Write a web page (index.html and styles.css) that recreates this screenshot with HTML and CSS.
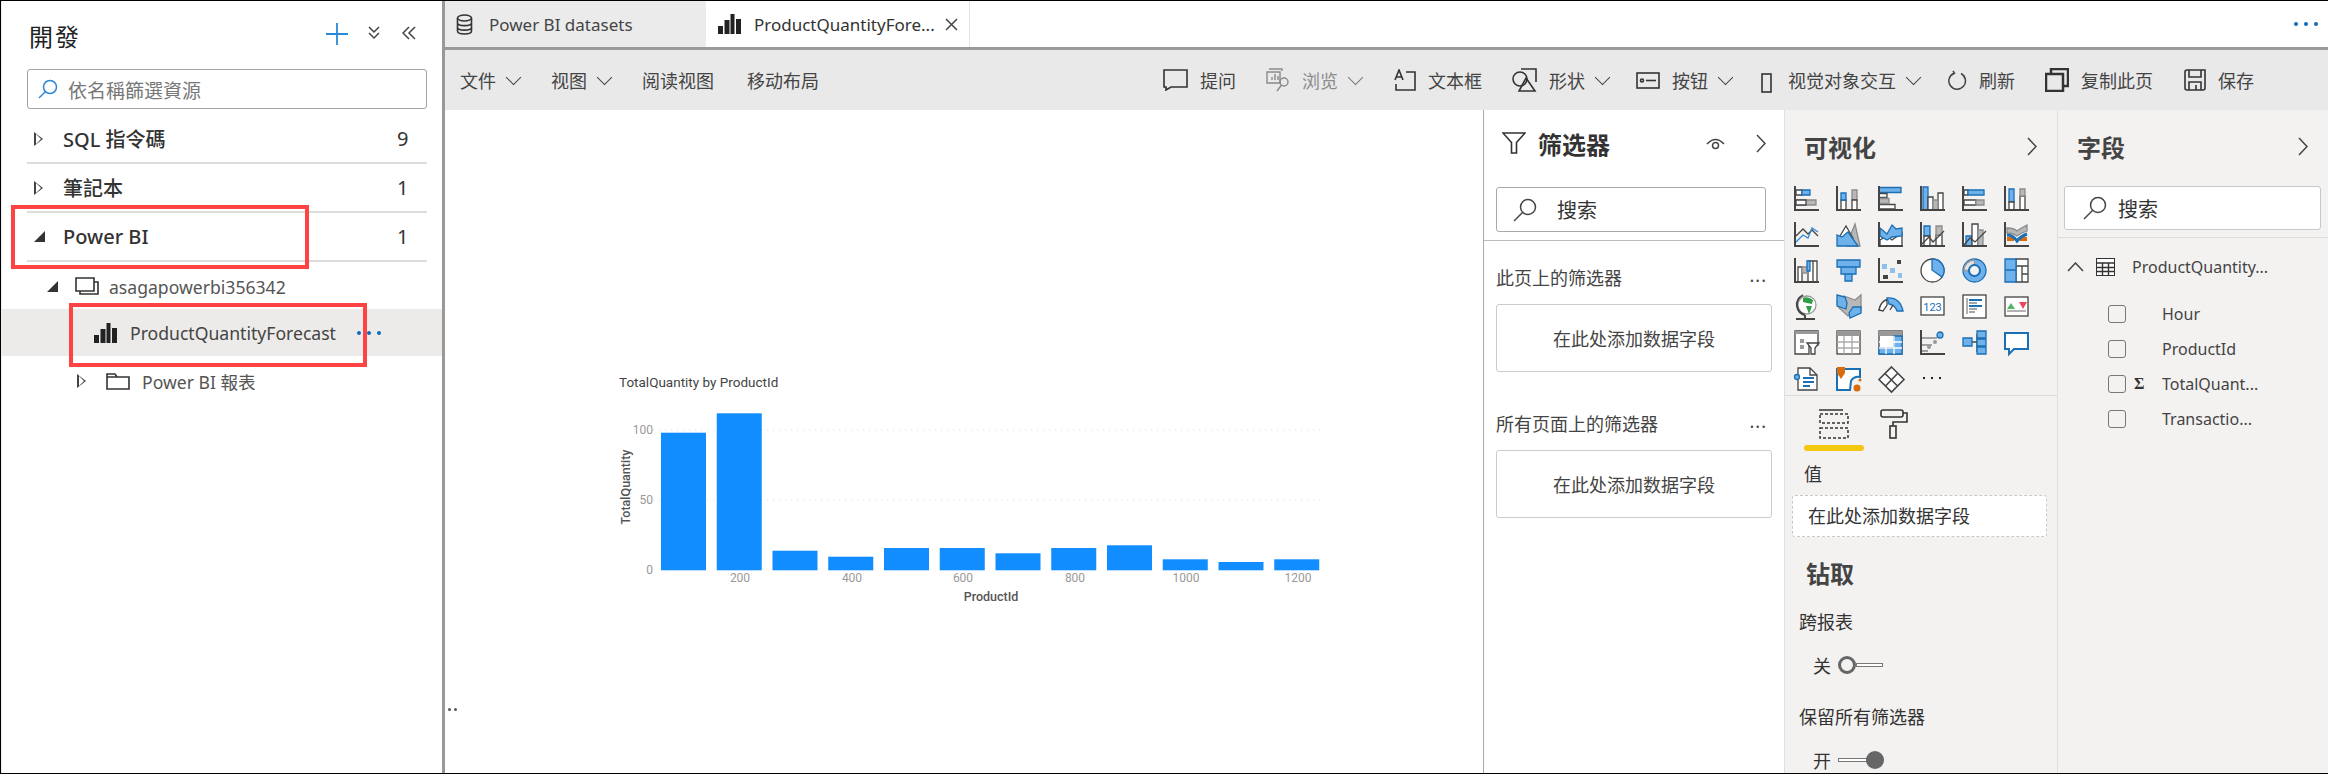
FILE: index.html
```html
<!DOCTYPE html>
<html lang="zh">
<head>
    <meta charset="UTF-8">
    <title>Power BI</title>
    <link rel="stylesheet" href="styles.css">
</head>
<body>
<div class="app">

    <!-- left resource panel -->
    <aside class="sidebar">
        <div class="side-head">
            <h1 class="side-title">開發</h1>
            <svg class="ic-plus" width="24" height="24" viewBox="0 0 24 24"><path d="M12 1V23M1 12H23"/></svg>
            <svg class="ic-line ic-dchev" width="14" height="14" viewBox="0 0 14 14"><path d="M2 1L7 6L12 1M2 7L7 12L12 7"/></svg>
            <svg class="ic-line ic-lchev" width="14" height="14" viewBox="0 0 14 14"><path d="M7 1L1 7L7 13M13 1L7 7L13 13"/></svg>
        </div>
        <div class="side-search">
            <svg class="ic-blue" width="20" height="20" viewBox="0 0 20 20"><circle cx="12" cy="8" r="6.5"/><path d="M7.5 12.5L1 19"/></svg>
            <span>依名稱篩選資源</span>
        </div>

        <div class="group"><span class="caret-o"></span><span class="group-name">SQL 指令碼</span><span class="group-count">9</span></div>
        <div class="group"><span class="caret-o"></span><span class="group-name">筆記本</span><span class="group-count">1</span></div>
        <div class="group"><span class="caret-f"></span><span class="group-name">Power BI</span><span class="group-count">1</span></div>

        <div class="tree tree-ws">
            <span class="caret-f"></span>
            <svg class="ic-dark" width="25" height="20" viewBox="0 0 25 20"><path d="M1 1H19V14H1ZM5 14V17H23V5H19"/></svg>
            <span>asagapowerbi356342</span>
        </div>
        <div class="tree tree-sel">
            <svg width="23" height="20" viewBox="0 0 23 20" class="ic-fill"><rect x="0" y="12" width="5" height="8"/><rect x="6.5" y="6" width="5" height="14"/><rect x="12.5" y="0" width="4" height="20"/><rect x="18" y="5" width="5" height="15"/></svg>
            <span>ProductQuantityForecast</span>
            <span class="blue-dots"><i></i><i></i><i></i></span>
        </div>
        <div class="tree tree-rep">
            <span class="caret-o"></span>
            <svg class="ic-dark" width="24" height="17" viewBox="0 0 24 17"><path d="M1 16V1H9L11 4H23V16Z M1 4H11"/></svg>
            <span>Power BI 報表</span>
        </div>

        <div class="mark mark-group"></div>
        <div class="mark mark-report"></div>
    </aside>

    <main class="main">
        <!-- tabs -->
        <div class="tabs">
            <div class="tab">
                <svg class="ic-dark" width="17" height="21" viewBox="0 0 17 21"><ellipse cx="8.5" cy="4" rx="7" ry="3"/><path d="M1.5 4V17C1.500 21 15.500 21 15.500 17V4M1.500 9C1.500 12.500 15.500 12.500 15.500 9M1.500 13.500C1.500 17 15.500 17 15.500 13.500"/></svg>
                <span>Power BI datasets</span>
            </div>
            <div class="tab tab-on">
                <svg class="ic-fill" width="23" height="20" viewBox="0 0 23 20"><rect x="0" y="12" width="5" height="8"/><rect x="6.500" y="6" width="5" height="14"/><rect x="12.500" y="0" width="4" height="20"/><rect x="18" y="5" width="5" height="15"/></svg>
                <span>ProductQuantityFore...</span>
                <svg class="ic-line tab-x" width="13" height="13" viewBox="0 0 13 13"><path d="M1 1L12 12M12 1L1 12"/></svg>
            </div>
            <span class="blue-dots tabs-more"><i></i><i></i><i></i></span>
        </div>

        <!-- ribbon -->
        <div class="ribbon">
            <div class="tool"><span>文件</span><b class="chev"></b></div>
            <div class="tool"><span>视图</span><b class="chev"></b></div>
            <div class="tool"><span>阅读视图</span></div>
            <div class="tool"><span>移动布局</span></div>

            <div class="tool tool-first">
                <svg class="ic-dark" width="25" height="22" viewBox="0 0 25 22"><path d="M1 1H24V18H8L3 21V18H1Z"/></svg>
                <span>提问</span>
            </div>
            <div class="tool tool-off">
                <svg class="ic-grey" width="24" height="24" viewBox="0 0 24 24"><path d="M3 1H16V3M1 4H14V15H1ZM6 12V9M9 12V6M12 12V8"/><circle cx="18" cy="14" r="4"/><path d="M15.500 17L11 23"/></svg>
                <span>浏览</span><b class="chev"></b>
            </div>
            <div class="tool">
                <svg class="ic-dark" width="23" height="22" viewBox="0 0 23 22"><path d="M2 11L6 1L10 11M3.500 8H8.500M13 3H22V21H3V15"/></svg>
                <span>文本框</span>
            </div>
            <div class="tool">
                <svg class="ic-dark" width="25" height="24" viewBox="0 0 25 24"><circle cx="8" cy="11" r="7"/><path d="M9 1H24V14M14 10L23 23H7Z"/></svg>
                <span>形状</span><b class="chev"></b>
            </div>
            <div class="tool">
                <svg class="ic-dark" width="24" height="17" viewBox="0 0 24 17"><rect x="1" y="1" width="22" height="15"/><circle cx="6" cy="8.500" r="1.500"/><path d="M10 8.500H20"/></svg>
                <span>按钮</span><b class="chev"></b>
            </div>
            <div class="tool">
                <svg class="ic-dark ic-phone" width="11" height="20" viewBox="0 0 11 20"><rect x="1" y="1" width="9" height="18"/></svg>
                <span>视觉对象交互</span><b class="chev"></b>
            </div>
            <div class="tool">
                <svg class="ic-thin" width="19" height="21" viewBox="0 0 19 21"><path d="M13 3.500A8.300 8.300 0 1 1 6 3.200M5 1L6.500 3.300L4 5"/></svg>
                <span>刷新</span>
            </div>
            <div class="tool">
                <svg class="ic-bold" width="24" height="24" viewBox="0 0 24 24"><path d="M6 6V1H23V18H18M1 6H18V23H1Z"/></svg>
                <span>复制此页</span>
            </div>
            <div class="tool">
                <svg class="ic-dark" width="22" height="22" viewBox="0 0 22 22"><path d="M1 3Q1 1 3 1H21V19Q21 21 19 21H3Q1 21 1 19ZM5 1V8H17V1M5 21V13H17V21M12 16V21"/></svg>
                <span>保存</span>
            </div>
        </div>

        <div class="work">
            <!-- report canvas -->
            <section class="canvas">
                <svg class="chart" width="740" height="260" viewBox="600 360 740 260">
                    <text class="c-title" x="619" y="387">TotalQuantity by ProductId</text>
                    <path class="c-grid" d="M647 430H1320M647 500H1320"/>
                    <g class="c-bars">
                        <rect x="661" y="432.700" width="45" height="137.600"/>
                        <rect x="716.750" y="413.300" width="45" height="157"/>
                        <rect x="772.500" y="550.700" width="45" height="19.600"/>
                        <rect x="828.250" y="556.700" width="45" height="13.600"/>
                        <rect x="884" y="548" width="45" height="22.300"/>
                        <rect x="939.750" y="548" width="45" height="22.300"/>
                        <rect x="995.500" y="553.300" width="45" height="17"/>
                        <rect x="1051.250" y="548" width="45" height="22.300"/>
                        <rect x="1107" y="545.300" width="45" height="25"/>
                        <rect x="1162.750" y="559.300" width="45" height="11"/>
                        <rect x="1218.500" y="562" width="45" height="8.300"/>
                        <rect x="1274.250" y="559.300" width="45" height="11"/>
                    </g>
                    <g class="c-tick c-y">
                        <text x="653" y="434">100</text>
                        <text x="653" y="504">50</text>
                        <text x="653" y="574">0</text>
                    </g>
                    <g class="c-tick c-x">
                        <text x="740" y="582">200</text>
                        <text x="852" y="582">400</text>
                        <text x="963" y="582">600</text>
                        <text x="1075" y="582">800</text>
                        <text x="1186" y="582">1000</text>
                        <text x="1298" y="582">1200</text>
                    </g>
                    <text class="c-axis" x="991" y="601">ProductId</text>
                    <text class="c-axis" transform="translate(630 487) rotate(-90)">TotalQuantity</text>
                </svg>
                <span class="grip"><i></i><i></i></span>
            </section>

            <!-- filters -->
            <section class="filters">
                <div class="filters-head">
                    <svg class="ic-dark" width="24" height="22" viewBox="0 0 24 22"><path d="M1 1H23L14.500 10.500V21H9.500V10.500Z"/></svg>
                    <h2>筛选器</h2>
                    <svg class="ic-thin f-eye" width="19" height="12" viewBox="0 0 19 12"><path d="M1 6Q9.500 -3 18 6"/><circle cx="9.500" cy="7.500" r="3"/></svg>
                    <svg class="ic-line f-chev" width="10" height="19" viewBox="0 0 10 19"><path d="M1 1L9 9.500L1 18"/></svg>
                </div>
                <div class="search f-search">
                    <svg class="ic-thin" width="24" height="24" viewBox="0 0 24 24"><circle cx="15" cy="9" r="7.500"/><path d="M9.500 14.500L1 23"/></svg>
                    <span>搜索</span>
                </div>
                <div class="f-body">
                    <div class="f-label"><span>此页上的筛选器</span><em>...</em></div>
                    <div class="f-drop">在此处添加数据字段</div>
                    <div class="f-label f-label-2"><span>所有页面上的筛选器</span><em>...</em></div>
                    <div class="f-drop">在此处添加数据字段</div>
                </div>
            </section>

            <!-- visualizations -->
            <section class="viz">
                <div class="pane-head">
                    <h2>可视化</h2>
                    <svg class="ic-line" width="10" height="19" viewBox="0 0 10 19"><path d="M1 1L9 9.500L1 18"/></svg>
                </div>
                <div class="viz-grid">
                    <svg viewBox="0 0 25 25"><path class="gr" d="M2 14H22V19H2Z"/><path class="wh" d="M2 14H12V19H2ZM2 4H8V9H2Z"/><path class="bl" d="M8 4H16V9H8Z"/><path class="ax" d="M1 0V24H25"/></svg>
                    <svg viewBox="0 0 25 25"><path class="gr" d="M16 4H21V14H16Z"/><path class="wh" d="M16 14H21V24H16ZM5 14H10V24H5Z"/><path class="bl" d="M5 7H10V14H5Z"/><path class="ax" d="M1 0V24H25"/></svg>
                    <svg viewBox="0 0 25 25"><path class="bl" d="M1 1.500H23V6.500H1Z"/><path class="wh" d="M1 7.500H9V11.500H1ZM1 18.500H17V23H1Z"/><path class="gr" d="M1 12.500H11V17.500H1Z"/><path class="ax" d="M1 0V24H25"/></svg>
                    <svg viewBox="0 0 25 25"><path class="bl" d="M3 1H8V24H3Z"/><path class="wh" d="M8 11H13V24H8ZM18 7H23V24H18Z"/><path class="gr" d="M13 14H18V24H13Z"/><path class="ax" d="M1 0V24H25"/></svg>
                    <svg viewBox="0 0 25 25"><path class="wh" d="M2 4H6V9H2ZM2 14H14V19H2Z"/><path class="bl" d="M6 4H22V9H6Z"/><path class="gr" d="M14 14H22V19H14Z"/><path class="ax" d="M1 0V24H25"/></svg>
                    <svg viewBox="0 0 25 25"><path class="bl" d="M5 3H10V16H5Z"/><path class="wh" d="M5 16H10V24H5ZM16 10H21V24H16Z"/><path class="gr" d="M16 3H21V10H16Z"/><path class="ax" d="M1 0V24H25"/></svg>

                    <svg viewBox="0 0 25 25"><path class="ax1" d="M2 14L9 7L14 12L18 8L24 14"/><path class="ln" d="M2 20L9 13L14 16L18 6L24 10"/><path class="ax" d="M1 0V24H25"/></svg>
                    <svg viewBox="0 0 25 25"><path class="gr" d="M11 22L19 2L24 24H11Z"/><path class="wh" d="M4 14L10 4L17 16L10 18Z"/><path class="bl" d="M1 24V13L6 15L12 10L22 24Z"/></svg>
                    <svg viewBox="0 0 25 25"><path class="wh" d="M2 18L9 14L14 18L24 11V24H2Z"/><path class="bl" d="M2 6L9 12L14 3L18 7L24 6V14L14 15L9 18L2 14Z"/><path class="ax" d="M1 0V24H25"/></svg>
                    <svg viewBox="0 0 25 25"><path class="bl" d="M4 4H10V14H4Z"/><path class="wh" d="M4 14H10V24H4ZM16 13H22V24H16Z"/><path class="gr" d="M16 4H22V13H16Z"/><path class="ax1" d="M2 22L9 15L13 20L24 9"/><path class="ax" d="M1 0V24H25"/></svg>
                    <svg viewBox="0 0 25 25"><path class="bl" d="M4 14H10V24H4Z"/><path class="wh" d="M10 2H16V24H10Z"/><path class="gr" d="M16 8H21V24H16Z"/><path class="ax1" d="M2 23L8 16L13 20L24 9"/><path class="ax" d="M1 0V24H25"/></svg>
                    <svg viewBox="0 0 25 25"><path class="or" d="M3 15H10V19H3ZM16 15H23V19H16Z"/><path class="gr" d="M3 6Q10 6 13 9Q17 6 23 3V9Q17 11 13 14Q9 11 3 11Z"/><path class="rb" d="M3 13Q9 13 13 19Q17 14 23 12"/><path class="ax" d="M1 0V24H25"/></svg>

                    <svg viewBox="0 0 25 25"><path class="wh" d="M4 9H8V24H4ZM19 3H23V24H19ZM14 3H19V24H14Z"/><path class="gr" d="M8 9H14V15H8Z"/><path class="bl" d="M13 3H16V13H13Z"/><path class="ax" d="M1 0V24H25"/></svg>
                    <svg viewBox="0 0 25 25"><path class="bl" d="M1 2H24V9H1ZM5 9H20V16H5ZM9 16H16V23H9Z"/></svg>
                    <svg viewBox="0 0 25 25"><path class="sq" d="M4 6H9V11H4ZM12 10H17V15H12ZM20 15H24V20H20Z"/><path class="dk" d="M19 2H23V6H19ZM5 17H10V21H5Z"/><path class="ax" d="M1 0V24H25"/></svg>
                    <svg viewBox="0 0 25 25"><circle class="pie" cx="12.500" cy="12.500" r="11.500"/><path class="bl" d="M12 1A11.500 11.500 0 0 1 22 19L12 12Z"/></svg>
                    <svg viewBox="0 0 25 25"><circle class="bl" cx="12.500" cy="12.500" r="11.500"/><path class="don-a" d="M2 12.500A10.500 10.500 0 0 1 12.500 2V7A5.500 5.500 0 0 0 7 12.500Z"/><circle class="don-h" cx="12.500" cy="12.500" r="5.500"/></svg>
                    <svg viewBox="0 0 25 25"><path class="wh" d="M12 1H24V8H12ZM12 8H18V24H12ZM18 8H24V16H18ZM18 16H24V24H18Z"/><path class="bl" d="M1 1H12V12H1ZM1 12H12V24H1Z"/></svg>

                    <svg viewBox="0 0 25 25"><circle class="gl-w" cx="13" cy="11" r="9"/><path class="gl-g" d="M9 4Q14 2 19 6L18 10L13 9L9 8ZM12 12L18 12L15 20Z"/><path class="ax" d="M9 1Q2 5 3 12Q4 19 11 21M2 25H21M11 21V25"/></svg>
                    <svg viewBox="0 0 25 25"><path class="gr" d="M8 2L19 6L25 1V16L18 19L12 22L3 14L1 8Z"/><path class="bl" d="M1 1L9 3L11 9L10 15L1 12ZM13 19L17 13L25 13V19L14 24Z"/></svg>
                    <svg viewBox="0 0 25 25"><path class="wh" d="M1 16Q2 8 9 6V11L5 17Z"/><path class="bl" d="M9 4Q22 3 25 17H19Q17 11 11 10Z"/><path class="ax1" d="M1 17Q2 8 9 5M12 16L15 11"/></svg>
                    <svg viewBox="0 0 25 25"><rect class="cd" x="1" y="3" width="23" height="18"/><text class="card-num" x="12.500" y="17">123</text></svg>
                    <svg viewBox="0 0 25 25"><rect class="cd" x="1" y="1" width="23" height="23"/><path class="ln2" d="M7 6H20M7 12H20"/><path class="ln3" d="M7 9H15M7 15H15M7 18H13M5 4V20"/></svg>
                    <svg viewBox="0 0 25 25"><rect class="cd" x="1" y="3" width="23" height="19"/><path class="up" d="M7 9L11 15H3Z"/><path class="dn" d="M15 8H23L19 15Z"/><path class="ln3" d="M3 17H22"/></svg>

                    <svg viewBox="0 0 25 25"><path class="cd" d="M1 1H24V15H15V24H1Z"/><path class="gf" d="M1 1H24V4H1ZM6 9H10V13H6ZM6 15H10V19H6Z"/><path class="fn" d="M13 13H25L21 18V24H17V18Z"/></svg>
                    <svg viewBox="0 0 25 25"><rect class="cd" x="1" y="1" width="23" height="23"/><path class="gf" d="M1 1H24V6H1Z"/><path class="tg" d="M1 12H24M1 18H24M8 6V24M16 6V24"/></svg>
                    <svg viewBox="0 0 25 25"><rect class="cd" x="1" y="1" width="23" height="23"/><path class="gf" d="M1 1H24V6H1Z"/><path class="bl-s" d="M16 6H24V24H1V18H16Z"/><path class="tw" d="M1 12H24M1 18H24M8 6V24M16 6V24"/></svg>
                    <svg viewBox="0 0 25 25"><path class="gl" d="M1 8H17M1 15H12M1 21H8"/><circle class="kb" cx="20" cy="5" r="3"/><circle class="kg" cx="15" cy="12" r="2"/><circle class="kg" cx="9" cy="17" r="2"/><path class="ax" d="M1 0V24H25"/></svg>
                    <svg viewBox="0 0 25 25"><path class="tr" d="M10 12H15M15 4V22"/><path class="bl-s" d="M1 8H10V16H1ZM15 1H24V8H15ZM15 9H24V16H15ZM15 17H24V24H15Z"/></svg>
                    <svg viewBox="0 0 25 25"><path class="qa" d="M1 3H24V19H10L5 24V19H1Z"/></svg>

                    <svg viewBox="0 0 25 25"><path class="cd" d="M4 2H16L23 9V24H4Z"/><path class="ax1" d="M16 2V9H23"/><circle class="kb" cx="3" cy="11" r="2.500"/><path class="ln2" d="M9 12H20M9 16H20M9 20H16"/></svg>
                    <svg viewBox="0 0 25 25"><path class="bl-w" d="M1 3H24V11Q18 10 15 15L14 24H1Z"/><path class="or" d="M1 1H9V7L5 13L1 7Z"/><circle class="or" cx="21" cy="22" r="3.500"/><circle class="or" cx="24" cy="14" r="1.500"/></svg>
                    <svg class="v-wide" viewBox="0 0 27 27"><path class="ax2" d="M13.500 1L26 13.500L13.500 26L1 13.500ZM7 7.500L19.500 20M20 7L8 19.500"/></svg>
                    <svg viewBox="0 0 25 25"><path class="dots-k" d="M3 12H5M11 12H13M19 12H21"/></svg>
                </div>
                <div class="viz-tabs">
                    <div class="viz-tab viz-tab-on">
                        <svg class="ic-dash" width="30" height="30" viewBox="0 0 30 30"><path class="solid" d="M0 1H24"/><rect x="1" y="5" width="28" height="9"/><rect x="1" y="19" width="28" height="10"/></svg>
                    </div>
                    <div class="viz-tab">
                        <svg class="ic-dark" width="28" height="30" viewBox="0 0 28 30"><rect x="1" y="1" width="22" height="7" rx="2"/><path d="M23 4H27V13H13V17"/><rect x="10" y="17" width="6" height="12"/></svg>
                    </div>
                </div>
                <div class="wells">
                    <div class="v-label">值</div>
                    <div class="v-drop">在此处添加数据字段</div>
                    <h3>钻取</h3>
                    <div class="v-label v-small">跨报表</div>
                    <div class="toggle"><span>关</span><span class="knob knob-off"></span><span class="track"></span></div>
                    <div class="v-label v-small v-keep">保留所有筛选器</div>
                    <div class="toggle toggle-on"><span>开</span><span class="track"></span><span class="knob"></span></div>
                </div>
            </section>

            <!-- fields -->
            <section class="fields">
                <div class="pane-head">
                    <h2>字段</h2>
                    <svg class="ic-line" width="10" height="19" viewBox="0 0 10 19"><path d="M1 1L9 9.500L1 18"/></svg>
                </div>
                <div class="search w-search">
                    <svg class="ic-thin" width="24" height="24" viewBox="0 0 24 24"><circle cx="15" cy="9" r="7.500"/><path d="M9.500 14.500L1 23"/></svg>
                    <span>搜索</span>
                </div>
                <div class="w-table">
                    <svg class="ic-thin" width="17" height="10" viewBox="0 0 17 10"><path d="M1 9L8.500 1L16 9"/></svg>
                    <svg class="ic-tbl" width="19" height="18" viewBox="0 0 19 18"><rect x="0.500" y="0.500" width="18" height="17"/><path d="M0 5H19M0 9.500H19M0 13.500H19M6.500 5V18M12.500 5V18"/></svg>
                    <span>ProductQuantity...</span>
                </div>
                <div class="w-row"><i class="check"></i><b class="sig"></b><span>Hour</span></div>
                <div class="w-row"><i class="check"></i><b class="sig"></b><span>ProductId</span></div>
                <div class="w-row"><i class="check"></i><b class="sig">Σ</b><span>TotalQuant...</span></div>
                <div class="w-row"><i class="check"></i><b class="sig"></b><span>Transactio...</span></div>
            </section>
        </div>
    </main>
</div>
</body>
</html>
```

FILE: styles.css
```css
* {
    box-sizing: border-box;
}

html, body {
    margin: 0;
    height: 100%;
    overflow: hidden;
    background: #fff;
}

body {
    font-family: 'Noto Sans', 'Noto Sans CJK SC', sans-serif;
    color: #333;
}

h1, h2, h3 {
    margin: 0;
}

svg {
    display: block;
    flex: none;
}

.app {
    display: flex;
    width: 2328px;
    height: 774px;
    border-top: 1px solid #000;
    border-left: 1px solid #000;
    border-bottom: 1px solid #000;
}

/* shared icon strokes */
.ic-line path, .ic-thin path, .ic-thin circle, .ic-dark path, .ic-dark rect, .ic-dark circle, .ic-dark ellipse,
.ic-grey path, .ic-grey circle, .ic-bold path, .ic-blue path, .ic-blue circle, .ic-plus path {
    fill: none;
}

.ic-line path { stroke: #444; stroke-width: 1.500; }
.ic-thin path, .ic-thin circle { stroke: #444; stroke-width: 1.500; }
.ic-dark path, .ic-dark rect, .ic-dark circle, .ic-dark ellipse { stroke: #333; stroke-width: 1.600; }
.ic-grey path, .ic-grey circle { stroke: #8a8a8a; stroke-width: 1.400; }
.ic-bold path { stroke: #333; stroke-width: 2.500; }
.ic-blue path, .ic-blue circle { stroke: #2b88d8; stroke-width: 1.500; }
.ic-plus path { stroke: #2b88d8; stroke-width: 1.800; }
.ic-fill rect { fill: #222; }

/* sidebar */
.sidebar {
    position: relative;
    width: 444px;
    flex: none;
    border-left: 1px solid #ececec;
    border-right: 3px solid #999;
}

.side-head {
    display: flex;
    align-items: center;
    height: 68px;
    padding: 0 0 0 27px;
}

.side-title {
    font: 400 24px 'Noto Sans CJK TC', sans-serif;
    color: #222;
    letter-spacing: 2px;
    width: 296px;
}

.ic-dchev { margin-left: 18px; }
.ic-lchev { margin-left: 21px; }
.ic-plus { margin-top: -3px; }
.ic-dchev, .ic-lchev { margin-top: -4px; }

.side-search {
    display: flex;
    align-items: center;
    gap: 10px;
    margin: 0 0 6px 25px;
    width: 400px;
    height: 40px;
    padding-left: 10px;
    border: 1px solid #a3a3a3;
    border-radius: 3px;
    font: 19px 'Noto Sans CJK TC', sans-serif;
    color: #777;
}

.group {
    display: flex;
    align-items: center;
    margin-left: 25px;
    width: 400px;
    height: 49px;
    border-bottom: 2px solid #ddd;
    font: 500 20px 'Noto Sans', 'Noto Sans CJK TC', sans-serif;
    color: #333;
}

.group-name { margin-left: 20px; flex: 1; }
.group-count { width: 30px; text-align: left; font-weight: 400; }

.caret-o {
    width: 0;
    height: 0;
    margin-left: 7px;
    border-left: 9px solid #444;
    border-top: 7.500px solid transparent;
    border-bottom: 7.500px solid transparent;
    position: relative;
    flex: none;
}

.caret-o::after {
    content: "";
    position: absolute;
    left: -7.500px;
    top: -5px;
    border-left: 5.500px solid #fff;
    border-top: 5px solid transparent;
    border-bottom: 5px solid transparent;
}

.caret-f {
    width: 0;
    height: 0;
    margin-left: 7px;
    border-bottom: 11px solid #333;
    border-left: 11px solid transparent;
    flex: none;
}

.group .caret-f + .group-name { margin-left: 18px; }

.tree {
    display: flex;
    align-items: center;
    font: 17.600px 'Noto Sans', 'Noto Sans CJK TC', sans-serif;
    color: #555;
}

.tree-ws {
    height: 47px;
    padding: 2px 0 0 38px;
}

.tree-ws svg { margin-left: 17px; margin-right: 9px; }

.tree-sel {
    height: 47px;
    padding-left: 92px;
    gap: 13px;
    background: #edebe9;
    color: #444;
}

.tree-rep {
    height: 50px;
    padding-left: 68px;
}

.tree-rep svg { margin-left: 20px; margin-right: 12px; }

.blue-dots {
    display: flex;
    gap: 6px;
    margin-left: 8px;
}

.blue-dots i {
    width: 4px;
    height: 4px;
    border-radius: 50%;
    background: #0f6cbd;
}

.mark {
    position: absolute;
    border: 4px solid #ff4343;
}

.mark-group { left: 9px; top: 204px; width: 298px; height: 64px; }
.mark-report { left: 67px; top: 302px; width: 298px; height: 64px; }

/* main */
.main {
    flex: 1;
    display: flex;
    flex-direction: column;
    min-width: 0;
}

.tabs {
    display: flex;
    align-items: center;
    height: 46px;
    flex: none;
    font-size: 17px;
}

.tab {
    display: flex;
    align-items: center;
    height: 100%;
    width: 261px;
    padding-left: 11px;
    gap: 16px;
    background: #ebebeb;
    color: #444;
}

.tab-on {
    width: 264px;
    padding-left: 12px;
    gap: 13px;
    background: #fff;
    border-right: 1px solid #e4e4e4;
    color: #333;
}

.tab-x { margin-left: -3px; }

.tabs-more {
    margin-left: auto;
    margin-right: 10px;
}

.ribbon {
    display: flex;
    align-items: center;
    gap: 30px;
    height: 63px;
    flex: none;
    padding: 0 74px 0 15px;
    background: #e9e9e9;
    border-top: 3px solid #999;
    font-size: 18px;
    color: #444;
}

.tool {
    display: flex;
    align-items: center;
    gap: 12px;
    height: 100%;
}

.tool:nth-child(4) { margin-left: 3px; }
.tool:nth-child(9) { margin-left: -4px; }
.tool:nth-child(10) { margin-left: -2px; }
.tool:nth-child(11) { margin-left: -3px; }
.tool:nth-child(13) { margin-left: 1px; }

.tool-first { margin-left: auto; }
.tool-off { color: #8c8c8c; }
.tool-off .chev { border-color: #777; }
.ic-phone { margin-top: 6px; margin-right: 4px; }

.chev {
    display: block;
    width: 11px;
    height: 11px;
    margin: -6px 2px 0 0;
    border-right: 1.500px solid #444;
    border-bottom: 1.500px solid #444;
    transform: rotate(45deg);
}

.work {
    flex: 1;
    display: flex;
    min-height: 0;
}

/* canvas with the chart */
.canvas {
    position: relative;
    flex: 1;
    min-width: 0;
    padding: 250px 0 0 155px;
}

.chart text { font-family: 'Roboto', sans-serif; }
.c-title { font-size: 13.500px; fill: #444; }
.c-grid { stroke: #ddd; stroke-width: 1; stroke-dasharray: 1 5; fill: none; }
.c-bars rect { fill: #118dff; }
.c-tick { font-size: 12px; fill: #999; }
.c-y { text-anchor: end; }
.c-x { text-anchor: middle; }
.c-axis { font-size: 12.500px; font-weight: 500; fill: #555; text-anchor: middle; }

.grip {
    position: absolute;
    left: 3px;
    top: 598px;
    display: flex;
    gap: 3px;
}

.grip i {
    width: 3px;
    height: 3px;
    background: #555;
    border-radius: 50%;
}

/* filter pane */
.filters {
    width: 302px;
    flex: none;
    border-left: 1px solid #aaa;
    border-right: 1px solid #e1dfdd;
}

.filters-head {
    display: flex;
    align-items: center;
    height: 66px;
    margin-bottom: 11px;
    padding-left: 18px;
}

.filters-head h2 {
    font: 700 24px 'Noto Sans CJK SC', sans-serif;
    color: #333;
    margin-left: 12px;
    width: 168px;
}

.f-eye { margin-top: 2px; }
.f-chev { margin-left: 31px; }

.search {
    display: flex;
    align-items: center;
    background: #fff;
    border-radius: 3px;
    font-size: 20px;
    color: #333;
}

.f-search {
    margin-left: 12px;
    width: 270px;
    height: 45px;
    padding-left: 16px;
    gap: 20px;
    border: 1px solid #aaa;
}

.f-body {
    margin-top: 8px;
    padding: 0 12px;
    border-top: 1px solid #bbb;
}

.f-label {
    display: flex;
    justify-content: space-between;
    align-items: center;
    height: 26px;
    margin-top: 23px;
    font-size: 18px;
    color: #444;
}

.f-label-2 { margin-top: 38px; }

.f-label em {
    font-style: normal;
    letter-spacing: 1px;
    margin-right: 5px;
    line-height: 1;
    margin-top: -4px;
}

.f-drop {
    display: flex;
    align-items: center;
    justify-content: center;
    height: 68px;
    width: 276px;
    margin-top: 14px;
    border: 1px solid #ccc;
    border-radius: 3px;
    font-size: 18px;
    color: #444;
}

/* visualizations pane */
.viz {
    width: 272px;
    flex: none;
    background: #f3f2f1;
}

.pane-head {
    display: flex;
    align-items: center;
    justify-content: space-between;
    height: 73px;
    margin-bottom: 2px;
    padding: 0 20px 0 19px;
}

.pane-head h2 {
    font: 700 24px 'Noto Sans CJK SC', sans-serif;
    color: #444;
}

.viz-grid {
    display: grid;
    grid-template-columns: repeat(6, 42px);
    grid-auto-rows: 36px;
    margin-top: 3px;
    padding-left: 9px;
    height: 210px;
    border-bottom: 1px solid #dcdcdc;
}

.viz-grid svg {
    width: 25px;
    height: 25px;
    overflow: visible;
}

.viz-grid .v-wide { width: 27px; height: 27px; }

.viz-grid path, .viz-grid circle, .viz-grid rect { stroke-width: 1.300; }
.ax { fill: none; stroke: #444; stroke-width: 2 !important; }
.ax1 { fill: none; stroke: #444; }
.ax2 { fill: #fff; stroke: #444; stroke-width: 1.600 !important; }
.bl { fill: #6fb1ea; stroke: #1a6fb5; }
.gr { fill: #b8b8b8; stroke: #8c8c8c; }
.wh { fill: #fff; stroke: #444; }
.ln { fill: none; stroke: #2b88d8; }
.or { fill: #d96b0b; stroke: none; }
.rb { fill: none; stroke: #1a6fb5; stroke-width: 3 !important; }
.sq { fill: #8cc0ee; stroke: none; }
.dk { fill: #444; stroke: none; }
.pie { fill: #fff; stroke: #444; }
.don-a { fill: #e3e3e3; stroke: #999; }
.don-h { fill: #f3f2f1; stroke: #1a6fb5; stroke-width: 2 !important; }
.gl-w { fill: #fff; stroke: #999; }
.gl-g { fill: #2f9e44; stroke: none; }
.cd { fill: #fff; stroke: #444; }
.card-num { font: 11px 'Roboto', sans-serif; fill: #1a6fb5; text-anchor: middle; }
.ln2 { fill: none; stroke: #1a6fb5; stroke-width: 2 !important; }
.ln3 { fill: none; stroke: #888; }
.up { fill: #58b368; stroke: none; }
.dn { fill: #e8485a; stroke: none; }
.gf { fill: #999; stroke: none; }
.fn { fill: #fff; stroke: #444; }
.tg { fill: none; stroke: #aaa; }
.tw { fill: none; stroke: #fff; }
.bl-s { fill: #6fb1ea; stroke: #1a6fb5; }
.bl-w { fill: #fff; stroke: #1a6fb5; stroke-width: 2 !important; }
.gl { fill: none; stroke: #888; }
.kb { fill: #6fb1ea; stroke: #1a6fb5; }
.kg { fill: #999; stroke: none; }
.tr { fill: none; stroke: #444; }
.qa { fill: #fff; stroke: #1a6fb5; stroke-width: 2 !important; }
.dots-k { fill: none; stroke: #222; stroke-width: 2 !important; }
.ic-tbl rect { fill: #fff; stroke: #333; }
.ic-tbl path { stroke: #333; stroke-width: 1.400; }

.viz-tabs {
    display: flex;
    gap: 31px;
    padding: 13px 0 0 34px;
    height: 56px;
}

.viz-tab { position: relative; }

.viz-tab-on::after {
    content: "";
    position: absolute;
    left: -15px;
    top: 36px;
    width: 60px;
    height: 6px;
    border-radius: 3px;
    background: #f2c811;
}

.ic-dash rect { fill: none; stroke: #333; stroke-width: 1.500; stroke-dasharray: 3 2; }
.ic-dash .solid { fill: none; stroke: #333; stroke-width: 1.500; }

.wells {
    padding-top: 9px;
    font-size: 18px;
    color: #333;
}

.v-label {
    padding-left: 19px;
    height: 26px;
    line-height: 26px;
}

.v-small { padding-left: 14px; }

.v-drop {
    margin: 8px 0 0 7px;
    width: 255px;
    height: 42px;
    line-height: 40px;
    padding-left: 15px;
    background: #fff;
    border: 1px dashed #c8c8c8;
    border-radius: 3px;
}

.wells h3 {
    font: 700 24px 'Noto Sans CJK SC', sans-serif;
    color: #444;
    padding-left: 21px;
    margin-top: 18px;
    height: 36px;
    line-height: 36px;
}

.wells h3 + .v-small { margin-top: 18px; }

.toggle {
    display: flex;
    align-items: center;
    height: 26px;
    margin-top: 17px;
    padding-left: 28px;
}

.toggle .knob { margin-left: 7px; }
.toggle-on .knob { margin-left: -1px; }
.toggle-on .track { margin-left: 7px; width: 29px; }

.knob {
    width: 18px;
    height: 18px;
    border-radius: 50%;
    background: #666;
    flex: none;
}

.knob-off {
    background: none;
    border: 3px solid #666;
}

.track {
    width: 27px;
    height: 4px;
    border: 1px solid #777;
    background: #fff;
    flex: none;
}

.v-keep { margin-top: 26px; }

/* fields pane */
.fields {
    width: 271px;
    flex: none;
    background: #f3f2f1;
    border-left: 1px solid #e1dfdd;
}

.w-search {
    margin-left: 6px;
    width: 257px;
    height: 44px;
    margin-top: 3px;
    padding-left: 18px;
    gap: 11px;
    border: 1px solid #c8c8c8;
}

.w-table {
    display: flex;
    align-items: center;
    height: 59px;
    margin-top: 7px;
    border-top: 1px solid #dcdcdc;
    padding-left: 9px;
    font-size: 16px;
    color: #444;
}

.ic-tbl { margin-left: 12px; margin-right: 17px; }

.w-row {
    display: flex;
    align-items: center;
    height: 35px;
    padding-left: 50px;
    font-size: 16px;
    color: #444;
}

.check {
    width: 18px;
    height: 18px;
    border: 1px solid #777;
    border-radius: 3px;
    flex: none;
}

.sig {
    width: 36px;
    padding-left: 8px;
    font: 700 16px 'Liberation Serif', serif;
    color: #333;
}
```
